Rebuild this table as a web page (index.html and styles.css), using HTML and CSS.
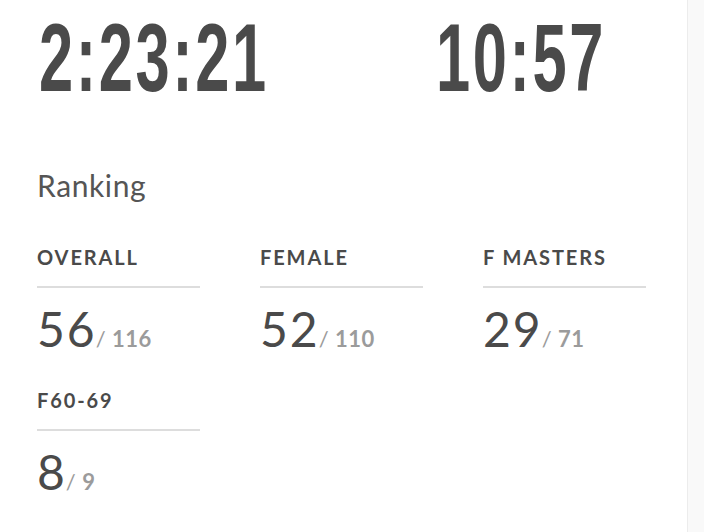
FILE: index.html
```html
<!DOCTYPE html>
<html>
<head>
<meta charset="utf-8">
<link rel="stylesheet" href="styles.css">
</head>
<body>
<div class="page">
  <main class="content">
    <section class="times">
      <div class="time"><span class="time-num">2:23:21</span></div>
      <div class="time"><span class="time-num">10:57</span></div>
    </section>
    <h2 class="title">Ranking</h2>
    <div class="grid">
      <div class="stat">
        <div class="label">OVERALL</div>
        <div class="value">56<span class="total"><span class="slash">/</span> 116</span></div>
      </div>
      <div class="stat">
        <div class="label">FEMALE</div>
        <div class="value">52<span class="total"><span class="slash">/</span> 110</span></div>
      </div>
      <div class="stat">
        <div class="label">F MASTERS</div>
        <div class="value">29<span class="total"><span class="slash">/</span> 71</span></div>
      </div>
      <div class="stat">
        <div class="label">F60-69</div>
        <div class="value">8<span class="total"><span class="slash">/</span> 9</span></div>
      </div>
    </div>
  </main>
  <aside class="side"></aside>
</div>
</body>
</html>
```

FILE: styles.css
```css
html, body {
  margin: 0;
  padding: 0;
  background: #ffffff;
}
.page {
  display: flex;
  height: 532px;
  overflow: hidden;
}
.content {
  flex: 1;
  padding: 9px 0 0 37px;
  font-family: Lato, "Noto Sans", sans-serif;
  color: #4a4a4a;
}
.side {
  width: 16px;
  background: #f9f9f9;
  border-left: 1px solid #ececec;
}
.times {
  display: grid;
  grid-template-columns: 397px 200px;
}
.time {
  height: 98px;
  line-height: 98px;
}
.time-num {
  display: inline-block;
  font-family: "Liberation Sans", Arial, sans-serif;
  font-weight: 700;
  font-size: 96px;
  color: #4a4a4a;
  transform: scaleX(0.64);
  transform-origin: left center;
  letter-spacing: 4px;
  margin-left: 2px;
}
.title {
  margin: 60px 0 0 0;
  font-size: 30px;
  font-weight: 400;
  letter-spacing: 0.6px;
  line-height: 36px;
  color: #555555;
}
.grid {
  display: grid;
  grid-template-columns: repeat(3, 163px);
  column-gap: 60px;
  margin-top: 43px;
}
.stat {
  display: flex;
  flex-direction: column;
}
.label {
  font-size: 20px;
  font-weight: 700;
  letter-spacing: 1.9px;
  line-height: 22px;
  padding-bottom: 18px;
  border-bottom: 2px solid #dddddd;
}
.value {
  font-size: 48px;
  font-weight: 400;
  letter-spacing: 2px;
  line-height: 56px;
  margin-top: 13px;
  margin-bottom: 22px;
  color: #4a4a4a;
}
.total {
  font-size: 22px;
  font-weight: 700;
  letter-spacing: 0.5px;
  color: #9b9b9b;
  margin-left: -1px;
}
.slash {
  font-weight: 400;
}
```
